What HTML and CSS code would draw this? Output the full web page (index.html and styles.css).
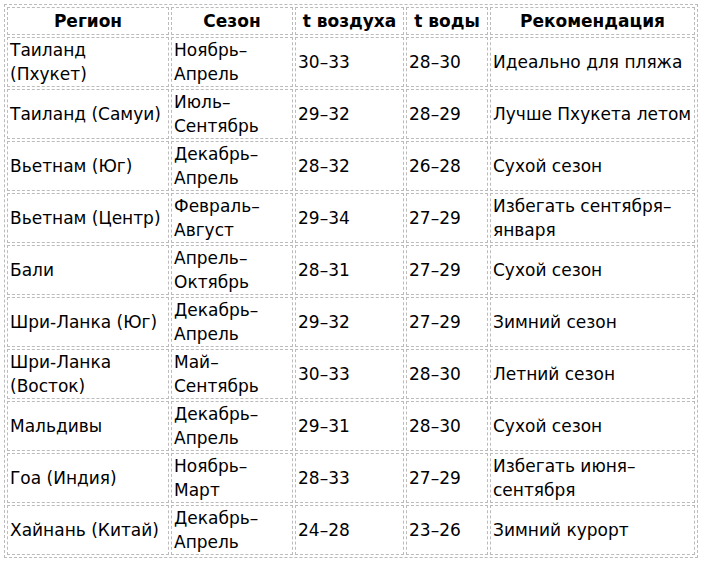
FILE: index.html
```html
<!DOCTYPE html>
<html lang="ru">
<head>
<meta charset="utf-8">
<link rel="stylesheet" href="styles.css">
</head>
<body>
<table class="climate">
  <colgroup>
    <col class="c1"><col class="c2"><col class="c3"><col class="c4"><col class="c5">
  </colgroup>
  <thead>
    <tr><th>Регион</th><th>Сезон</th><th>t воздуха</th><th>t воды</th><th>Рекомендация</th></tr>
  </thead>
  <tbody>
    <tr><td>Таиланд<br>(Пхукет)</td><td>Ноябрь–<br>Апрель</td><td>30–33</td><td>28–30</td><td>Идеально для пляжа</td></tr>
    <tr><td>Таиланд (Самуи)</td><td>Июль–<br>Сентябрь</td><td>29–32</td><td>28–29</td><td>Лучше Пхукета летом</td></tr>
    <tr><td>Вьетнам (Юг)</td><td>Декабрь–<br>Апрель</td><td>28–32</td><td>26–28</td><td>Сухой сезон</td></tr>
    <tr><td>Вьетнам (Центр)</td><td>Февраль–<br>Август</td><td>29–34</td><td>27–29</td><td>Избегать сентября–<br>января</td></tr>
    <tr><td>Бали</td><td>Апрель–<br>Октябрь</td><td>28–31</td><td>27–29</td><td>Сухой сезон</td></tr>
    <tr><td>Шри-Ланка (Юг)</td><td>Декабрь–<br>Апрель</td><td>29–32</td><td>27–29</td><td>Зимний сезон</td></tr>
    <tr><td>Шри-Ланка<br>(Восток)</td><td>Май–<br>Сентябрь</td><td>30–33</td><td>28–30</td><td>Летний сезон</td></tr>
    <tr><td>Мальдивы</td><td>Декабрь–<br>Апрель</td><td>29–31</td><td>28–30</td><td>Сухой сезон</td></tr>
    <tr><td>Гоа (Индия)</td><td>Ноябрь–<br>Март</td><td>28–33</td><td>27–29</td><td>Избегать июня–<br>сентября</td></tr>
    <tr><td>Хайнань (Китай)</td><td>Декабрь–<br>Апрель</td><td>24–28</td><td>23–26</td><td>Зимний курорт</td></tr>
  </tbody>
</table>
</body>
</html>
```
FILE: styles.css
```css
html, body {
  margin: 0;
  padding: 0;
  background: #fff;
}
body {
  padding: 4px 4px;
  font-family: "DejaVu Sans", Verdana, sans-serif;
  font-size: 17px;
  color: #000;
}
.climate {
  border: 1px dashed #bbb;
  border-spacing: 2px;
  table-layout: fixed;
  width: 694px;
}
.c1 { width: 162px; }
.c2 { width: 122px; }
.c3 { width: 109px; }
.c4 { width: 82px; }
.c5 { width: auto; }
.climate th,
.climate td {
  border: 1px dashed #bbb;
  line-height: 24px;
  vertical-align: middle;
  white-space: nowrap;
}
.climate th {
  font-weight: bold;
  text-align: center;
  padding: 1px 2px;
}
.climate td {
  text-align: left;
  padding: 0 2px;
  height: 48px;
}
```
